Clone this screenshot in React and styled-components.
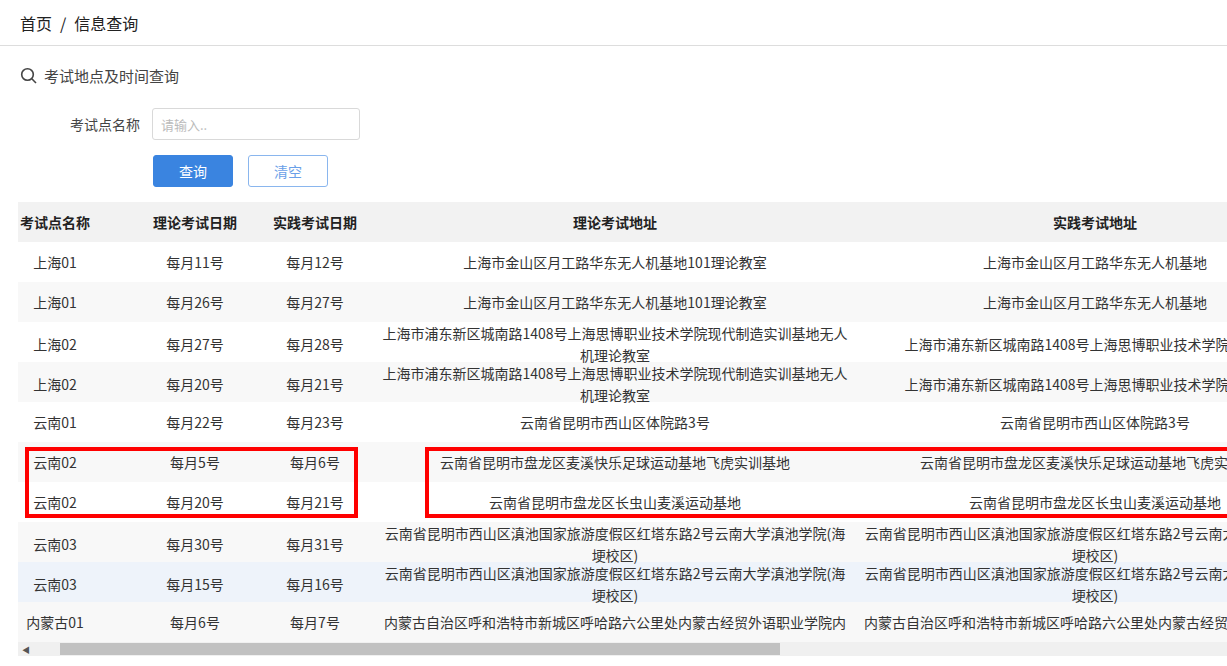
import React from 'react'
import styled, { createGlobalStyle } from 'styled-components'

const Global = createGlobalStyle`
  body { margin: 0; font-family: "Noto Sans CJK SC", sans-serif; color: #333; background: #fff; }
`

const Crumb = styled.div`
  height: 45px;
  display: flex;
  align-items: center;
  padding-left: 20px;
  font-size: 16px;
  color: #222;
  border-bottom: 1px solid #ddd;
  span { margin: 0 8px; }
`

const Title = styled.div`
  display: flex;
  align-items: center;
  gap: 6px;
  padding: 19px 0 0 20px;
  font-size: 15px;
  color: #444;
`

const FormRow = styled.div`
  display: flex;
  align-items: center;
  padding: 22px 0 0 70px;
  font-size: 14px;
  color: #444;
`

const Input = styled.input`
  margin-left: 12px;
  width: 208px;
  height: 32px;
  box-sizing: border-box;
  border: 1px solid #d9d9d9;
  border-radius: 3px;
  padding: 0 8px;
  font-family: inherit;
  font-size: 13px;
  &::placeholder { color: #bbb; }
`

const Buttons = styled.div`
  display: flex;
  gap: 15px;
  padding: 15px 0 0 153px;
`

const Btn = styled.button`
  width: 80px;
  height: 32px;
  border-radius: 3px;
  font-family: inherit;
  font-size: 14px;
  border: 1px solid;
  background: ${p => (p.primary ? '#3a84e0' : '#fff')};
  color: ${p => (p.primary ? '#fff' : '#6aa0e8')};
  border-color: ${p => (p.primary ? '#3a84e0' : '#8ab6ee')};
`

const TableWrap = styled.div`
  position: relative;
  margin: 15px 0 0 18px;
  overflow: hidden;
`

const Grid = styled.div`
  width: 1317px;
`

const Row = styled.div`
  display: grid;
  grid-template-columns: 117px 120px 120px 480px 480px;
  height: 40px;
  align-items: center;
  font-size: 14px;
  line-height: 22px;
  background: ${p => p.bg || '#fff'};
  font-weight: ${p => (p.head ? 700 : 400)};
  color: ${p => (p.head ? '#222' : '#333')};
`

const Cell = styled.div`
  text-align: center;
  padding: 0 4px;
`

const NameCell = styled.div`
  width: 74px;
  text-align: ${p => (p.head ? 'left' : 'center')};
  padding-left: ${p => (p.head ? '2px' : '0')};
  white-space: nowrap;
`

const Scroll = styled.div`
  height: 14px;
  background: #f0f0f0;
  display: flex;
  align-items: center;
  gap: 30px;
  font-size: 8px;
  color: #555;
  padding-left: 4px;
`

const Thumb = styled.div`
  width: 720px;
  height: 12px;
  background: #c1c1c1;
`

const Mark = styled.div`
  position: absolute;
  top: 245px;
  height: 71px;
  box-sizing: border-box;
  border: 4px solid #f00;
  left: ${p => p.l}px;
  width: ${p => p.w}px;
`

const a1 = '上海市金山区月工路华东无人机基地101理论教室'
const b1 = '上海市金山区月工路华东无人机基地'
const a2 = '上海市浦东新区城南路1408号上海思博职业技术学院现代制造实训基地无人机理论教室'
const b2 = '上海市浦东新区城南路1408号上海思博职业技术学院实训基地'
const a3 = '云南省昆明市西山区滇池国家旅游度假区红塔东路2号云南大学滇池学院(海埂校区)'
const rows = [
  ['上海01', '每月11号', '每月12号', a1, b1],
  ['上海01', '每月26号', '每月27号', a1, b1],
  ['上海02', '每月27号', '每月28号', a2, b2],
  ['上海02', '每月20号', '每月21号', a2, b2],
  ['云南01', '每月22号', '每月23号', '云南省昆明市西山区体院路3号', '云南省昆明市西山区体院路3号'],
  ['云南02', '每月5号', '每月6号', '云南省昆明市盘龙区麦溪快乐足球运动基地飞虎实训基地', '云南省昆明市盘龙区麦溪快乐足球运动基地飞虎实训基地'],
  ['云南02', '每月20号', '每月21号', '云南省昆明市盘龙区长虫山麦溪运动基地', '云南省昆明市盘龙区长虫山麦溪运动基地'],
  ['云南03', '每月30号', '每月31号', a3, a3],
  ['云南03', '每月15号', '每月16号', a3, a3],
  ['内蒙古01', '每月6号', '每月7号', '内蒙古自治区呼和浩特市新城区呼哈路六公里处内蒙古经贸外语职业学院内', '内蒙古自治区呼和浩特市新城区呼哈路六公里处内蒙古经贸外语职业学院内'],
]

const bgFor = i => (i === 8 ? '#eef3fa' : i % 2 ? '#f8f8f8' : '#fff')

export default function App() {
  return (
    <>
      <Global />
      <Crumb>首页<span>/</span>信息查询</Crumb>
      <Title>
        <svg width="18" height="18" viewBox="0 0 18 18" fill="none" stroke="#444" strokeWidth="1.6">
          <circle cx="7.5" cy="7.5" r="5.8" />
          <path d="M11.8 11.8 L16 16" />
        </svg>
        考试地点及时间查询
      </Title>
      <FormRow>
        考试点名称
        <Input placeholder="请输入.." />
      </FormRow>
      <Buttons>
        <Btn primary>查询</Btn>
        <Btn>清空</Btn>
      </Buttons>
      <TableWrap>
        <Grid>
          <Row head bg="#f2f2f2">
            <NameCell head>考试点名称</NameCell>
            <Cell>理论考试日期</Cell>
            <Cell>实践考试日期</Cell>
            <Cell>理论考试地址</Cell>
            <Cell>实践考试地址</Cell>
          </Row>
          {rows.map((r, i) => (
            <Row key={i} bg={bgFor(i)}>
              <NameCell>{r[0]}</NameCell>
              <Cell>{r[1]}</Cell>
              <Cell>{r[2]}</Cell>
              <Cell>{r[3]}</Cell>
              <Cell>{r[4]}</Cell>
            </Row>
          ))}
        </Grid>
        <Scroll>
          ◀
          <Thumb />
        </Scroll>
        <Mark l={7} w={333} />
        <Mark l={407} w={820} />
      </TableWrap>
    </>
  )
}
